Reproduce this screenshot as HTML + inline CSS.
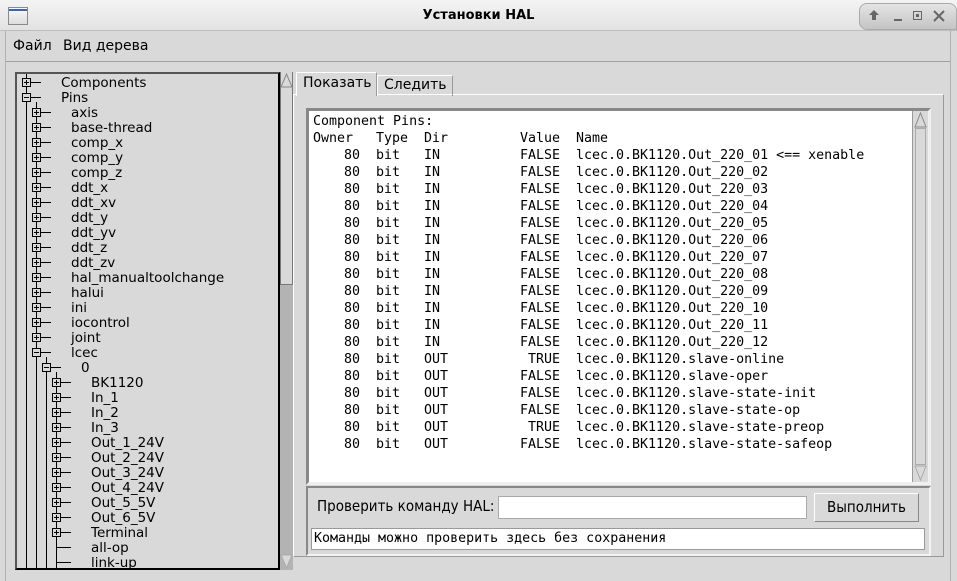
<!DOCTYPE html>
<html><head><meta charset="utf-8">
<style>
*{margin:0;padding:0;box-sizing:border-box}
body{width:957px;height:581px;background:#d9d9d9;position:relative;overflow:hidden;font-family:"DejaVu Sans","Liberation Sans",sans-serif;font-size:13.5px;color:#000}
.abs{position:absolute}
.title{left:0;top:0;width:957px;height:31px;background:linear-gradient(#f4f4f4,#e2e2e2);border-bottom:1px solid #bdbdbd}
.mono{font-family:"DejaVu Sans Mono","Liberation Mono",monospace;font-size:13.3px;white-space:pre}
.row{position:absolute;left:0;height:17px;line-height:17px}
.row span{position:absolute;top:0}
.cond{font-family:"DejaVu Sans Condensed","DejaVu Sans","Liberation Sans",sans-serif;font-stretch:condensed}
</style></head><body>
<div class="abs title">
  <div class="abs" style="left:8px;top:7px;width:20px;height:18px;border:1px solid #8a8a8a;background:linear-gradient(#fafafa,#ddd)"><div style="height:2px;background:#3c64b4;margin-top:1px"></div></div>
  <div class="abs" style="left:0;width:957px;top:8px;text-align:center;font-weight:bold;font-size:13px">Установки HAL</div>
  <div class="abs" style="left:859px;top:3px;width:98px;height:27px;border:1px solid #aaa;border-radius:8px 8px 0 8px;background:linear-gradient(#e4e4e4,#c4c4c4)"></div>
  <svg class="abs" style="left:868px;top:9px" width="12" height="12"><path d="M6 1L1 6H4V11H8V6H11Z" fill="#666"/></svg>
  <div class="abs" style="left:894px;top:19px;width:8px;height:2px;background:#666"></div>
  <div class="abs" style="left:913px;top:11px;width:9px;height:9px;border:1px solid #666"><div style="margin:2px;height:3px;background:#666"></div></div>
  <svg class="abs" style="left:933px;top:10px" width="12" height="12"><path d="M1 1L11 11M11 1L1 11" stroke="#666" stroke-width="2"/></svg>
</div>
<div class="abs" style="left:5px;top:31px;width:1px;height:550px;background:#b0b0b0"></div>
<div class="abs" style="left:950px;top:31px;width:1px;height:550px;background:#b0b0b0"></div>
<div class="abs" style="left:6px;top:31px;width:944px;height:31px;border-bottom:1px solid #a0a0a0"></div>
<div class="abs" style="left:13px;top:38px;font-size:14px">Файл</div>
<div class="abs" style="left:63px;top:38px;font-size:14px">Вид дерева</div>

<div class="abs" style="left:15px;top:72px;width:265px;height:498px;border:2px solid #000;border-color:#555 #000 #000 #555;background:#d9d9d9;overflow:hidden">
<svg width="263" height="496" style="position:absolute;left:-17px;top:-74px;overflow:visible" xmlns="http://www.w3.org/2000/svg">
<g stroke="#000" stroke-width="1" fill="none" shape-rendering="crispEdges">
<line x1="26.5" y1="74" x2="26.5" y2="570"/>
<line x1="36.5" y1="102" x2="36.5" y2="570"/>
<line x1="46.5" y1="357" x2="46.5" y2="570"/>
<line x1="56.5" y1="372" x2="56.5" y2="570"/>
</g>
<g font-family="DejaVu Sans, Liberation Sans, sans-serif" font-size="13.5" fill="#000">
<text x="61" y="87">Components</text><text x="61" y="102">Pins</text>
<text x="71" y="117">axis</text><text x="71" y="132">base-thread</text><text x="71" y="147">comp_x</text><text x="71" y="162">comp_y</text><text x="71" y="177">comp_z</text><text x="71" y="192">ddt_x</text><text x="71" y="207">ddt_xv</text><text x="71" y="222">ddt_y</text><text x="71" y="237">ddt_yv</text><text x="71" y="252">ddt_z</text><text x="71" y="267">ddt_zv</text><text x="71" y="282">hal_manualtoolchange</text><text x="71" y="297">halui</text><text x="71" y="312">ini</text><text x="71" y="327">iocontrol</text><text x="71" y="342">joint</text><text x="71" y="357">lcec</text>
<text x="81" y="372">0</text>
<text x="91" y="387">BK1120</text><text x="91" y="402">In_1</text><text x="91" y="417">In_2</text><text x="91" y="432">In_3</text><text x="91" y="447">Out_1_24V</text><text x="91" y="462">Out_2_24V</text><text x="91" y="477">Out_3_24V</text><text x="91" y="492">Out_4_24V</text><text x="91" y="507">Out_5_5V</text><text x="91" y="522">Out_6_5V</text><text x="91" y="537">Terminal</text><text x="91" y="552">all-op</text><text x="91" y="567">link-up</text>
</g>
<g stroke="#000" stroke-width="1" fill="#d9d9d9" shape-rendering="crispEdges">
<path d="M31 82.5H41M31 97.5H41"/><rect x="22.5" y="78.5" width="8" height="8"/><path d="M24 82.5h5M26.5 80v5"/>
<rect x="22.5" y="93.5" width="8" height="8"/><path d="M24 97.5h5"/>
</g>
<g stroke="#000" stroke-width="1" fill="#d9d9d9" shape-rendering="crispEdges">
<path d="M41 112.5h10M41 127.5h10M41 142.5h10M41 157.5h10M41 172.5h10M41 187.5h10M41 202.5h10M41 217.5h10M41 232.5h10M41 247.5h10M41 262.5h10M41 277.5h10M41 292.5h10M41 307.5h10M41 322.5h10M41 337.5h10M41 352.5h10"/>
<rect x="32.5" y="108.5" width="8" height="8"/><rect x="32.5" y="123.5" width="8" height="8"/><rect x="32.5" y="138.5" width="8" height="8"/><rect x="32.5" y="153.5" width="8" height="8"/><rect x="32.5" y="168.5" width="8" height="8"/><rect x="32.5" y="183.5" width="8" height="8"/><rect x="32.5" y="198.5" width="8" height="8"/><rect x="32.5" y="213.5" width="8" height="8"/><rect x="32.5" y="228.5" width="8" height="8"/><rect x="32.5" y="243.5" width="8" height="8"/><rect x="32.5" y="258.5" width="8" height="8"/><rect x="32.5" y="273.5" width="8" height="8"/><rect x="32.5" y="288.5" width="8" height="8"/><rect x="32.5" y="303.5" width="8" height="8"/><rect x="32.5" y="318.5" width="8" height="8"/><rect x="32.5" y="333.5" width="8" height="8"/><rect x="32.5" y="348.5" width="8" height="8"/>
<path d="M34 112.5h5M36.5 110v5M34 127.5h5M36.5 125v5M34 142.5h5M36.5 140v5M34 157.5h5M36.5 155v5M34 172.5h5M36.5 170v5M34 187.5h5M36.5 185v5M34 202.5h5M36.5 200v5M34 217.5h5M36.5 215v5M34 232.5h5M36.5 230v5M34 247.5h5M36.5 245v5M34 262.5h5M36.5 260v5M34 277.5h5M36.5 275v5M34 292.5h5M36.5 290v5M34 307.5h5M36.5 305v5M34 322.5h5M36.5 320v5M34 337.5h5M36.5 335v5M34 352.5h5"/>
<path d="M51 367.5h10"/><rect x="42.5" y="363.5" width="8" height="8"/><path d="M44 367.5h5"/>
<path d="M61 382.5h10M61 397.5h10M61 412.5h10M61 427.5h10M61 442.5h10M61 457.5h10M61 472.5h10M61 487.5h10M61 502.5h10M61 517.5h10M61 532.5h10M57 547.5h14M57 562.5h14"/>
<rect x="52.5" y="378.5" width="8" height="8"/><rect x="52.5" y="393.5" width="8" height="8"/><rect x="52.5" y="408.5" width="8" height="8"/><rect x="52.5" y="423.5" width="8" height="8"/><rect x="52.5" y="438.5" width="8" height="8"/><rect x="52.5" y="453.5" width="8" height="8"/><rect x="52.5" y="468.5" width="8" height="8"/><rect x="52.5" y="483.5" width="8" height="8"/><rect x="52.5" y="498.5" width="8" height="8"/><rect x="52.5" y="513.5" width="8" height="8"/><rect x="52.5" y="528.5" width="8" height="8"/>
<path d="M54 382.5h5M56.5 380v5M54 397.5h5M56.5 395v5M54 412.5h5M56.5 410v5M54 427.5h5M56.5 425v5M54 442.5h5M56.5 440v5M54 457.5h5M56.5 455v5M54 472.5h5M56.5 470v5M54 487.5h5M56.5 485v5M54 502.5h5M56.5 500v5M54 517.5h5M56.5 515v5M54 532.5h5M56.5 530v5"/>
</g>
</svg>
</div>
<div class="abs" style="left:280px;top:72px;width:13px;height:498px;background:#b3b3b3"></div>
<div class="abs" style="left:280px;top:72px;width:13px;height:213px;background:#d9d9d9;border:1px solid #777;border-top:none"></div>
<svg class="abs" style="left:280px;top:72px" width="13" height="16"><path d="M1 15L6.5 2L12 15Z" fill="#d9d9d9" stroke="#888"/></svg>
<svg class="abs" style="left:280px;top:554px" width="13" height="16"><path d="M1 1L6.5 14L12 1Z" fill="#d9d9d9" stroke="#aaa"/></svg>

<div class="abs" style="left:293px;top:94px;width:651px;height:463px;border:1px solid #aaa;border-color:#fff #999 #999 #fff;box-shadow:inset 0 0 0 1px #d9d9d9"></div>
<div class="abs" style="left:296px;top:72px;width:81px;height:24px;border:1px solid #aaa;border-bottom:none;border-color:#fff #999 #999 #fff;background:#d9d9d9;padding:2px 0 0 6px;font-size:14px">Показать</div>
<div class="abs" style="left:377px;top:75px;width:76px;height:21px;border:1px solid #aaa;border-color:#fff #999 #999 #fff;border-bottom:none;padding:1px 0 0 6px;font-size:14px">Следить</div>

<div class="abs" style="left:306px;top:108px;width:625px;height:377px;border:3px solid #888;border-color:#888 #f0f0f0 #f0f0f0 #888;background:#fff"></div>
<div class="abs" style="left:912px;top:111px;width:16px;height:371px;background:#d9d9d9;border-left:1px solid #999"></div>
<svg class="abs" style="left:913px;top:111px" width="15" height="371"><path d="M2 16L7.5 2L13 16Z" fill="#d9d9d9" stroke="#888"/><rect x="2.5" y="17.5" width="10" height="336" fill="none" stroke="#aaa"/><path d="M2 355L7.5 369L13 355Z" fill="#d9d9d9" stroke="#aaa"/></svg>

<div class="abs mono" style="left:313px;top:113px;width:595px;height:360px">
<div class="row" style="top:0"><span style="left:0">Component Pins:</span></div>
<div class="row" style="top:17px"><span style="left:0">Owner</span><span style="left:63px">Type</span><span style="left:111px">Dir</span><span style="left:207px">Value</span><span style="left:263px">Name</span></div>
<div class="row" style="top:34px"><span style="left:31px">80</span><span style="left:63px">bit</span><span style="left:111px">IN</span><span style="left:207px">FALSE</span><span style="left:263px">lcec.0.BK1120.Out_220_01 &lt;== xenable</span></div>
<div class="row" style="top:51px"><span style="left:31px">80</span><span style="left:63px">bit</span><span style="left:111px">IN</span><span style="left:207px">FALSE</span><span style="left:263px">lcec.0.BK1120.Out_220_02</span></div>
<div class="row" style="top:68px"><span style="left:31px">80</span><span style="left:63px">bit</span><span style="left:111px">IN</span><span style="left:207px">FALSE</span><span style="left:263px">lcec.0.BK1120.Out_220_03</span></div>
<div class="row" style="top:85px"><span style="left:31px">80</span><span style="left:63px">bit</span><span style="left:111px">IN</span><span style="left:207px">FALSE</span><span style="left:263px">lcec.0.BK1120.Out_220_04</span></div>
<div class="row" style="top:102px"><span style="left:31px">80</span><span style="left:63px">bit</span><span style="left:111px">IN</span><span style="left:207px">FALSE</span><span style="left:263px">lcec.0.BK1120.Out_220_05</span></div>
<div class="row" style="top:119px"><span style="left:31px">80</span><span style="left:63px">bit</span><span style="left:111px">IN</span><span style="left:207px">FALSE</span><span style="left:263px">lcec.0.BK1120.Out_220_06</span></div>
<div class="row" style="top:136px"><span style="left:31px">80</span><span style="left:63px">bit</span><span style="left:111px">IN</span><span style="left:207px">FALSE</span><span style="left:263px">lcec.0.BK1120.Out_220_07</span></div>
<div class="row" style="top:153px"><span style="left:31px">80</span><span style="left:63px">bit</span><span style="left:111px">IN</span><span style="left:207px">FALSE</span><span style="left:263px">lcec.0.BK1120.Out_220_08</span></div>
<div class="row" style="top:170px"><span style="left:31px">80</span><span style="left:63px">bit</span><span style="left:111px">IN</span><span style="left:207px">FALSE</span><span style="left:263px">lcec.0.BK1120.Out_220_09</span></div>
<div class="row" style="top:187px"><span style="left:31px">80</span><span style="left:63px">bit</span><span style="left:111px">IN</span><span style="left:207px">FALSE</span><span style="left:263px">lcec.0.BK1120.Out_220_10</span></div>
<div class="row" style="top:204px"><span style="left:31px">80</span><span style="left:63px">bit</span><span style="left:111px">IN</span><span style="left:207px">FALSE</span><span style="left:263px">lcec.0.BK1120.Out_220_11</span></div>
<div class="row" style="top:221px"><span style="left:31px">80</span><span style="left:63px">bit</span><span style="left:111px">IN</span><span style="left:207px">FALSE</span><span style="left:263px">lcec.0.BK1120.Out_220_12</span></div>
<div class="row" style="top:238px"><span style="left:31px">80</span><span style="left:63px">bit</span><span style="left:111px">OUT</span><span style="left:215px">TRUE</span><span style="left:263px">lcec.0.BK1120.slave-online</span></div>
<div class="row" style="top:255px"><span style="left:31px">80</span><span style="left:63px">bit</span><span style="left:111px">OUT</span><span style="left:207px">FALSE</span><span style="left:263px">lcec.0.BK1120.slave-oper</span></div>
<div class="row" style="top:272px"><span style="left:31px">80</span><span style="left:63px">bit</span><span style="left:111px">OUT</span><span style="left:207px">FALSE</span><span style="left:263px">lcec.0.BK1120.slave-state-init</span></div>
<div class="row" style="top:289px"><span style="left:31px">80</span><span style="left:63px">bit</span><span style="left:111px">OUT</span><span style="left:207px">FALSE</span><span style="left:263px">lcec.0.BK1120.slave-state-op</span></div>
<div class="row" style="top:306px"><span style="left:31px">80</span><span style="left:63px">bit</span><span style="left:111px">OUT</span><span style="left:215px">TRUE</span><span style="left:263px">lcec.0.BK1120.slave-state-preop</span></div>
<div class="row" style="top:323px"><span style="left:31px">80</span><span style="left:63px">bit</span><span style="left:111px">OUT</span><span style="left:207px">FALSE</span><span style="left:263px">lcec.0.BK1120.slave-state-safeop</span></div>
</div>

<div class="abs" style="left:306px;top:486px;width:625px;height:70px;border:2px solid #888;border-color:#888 #f4f4f4 #f4f4f4 #888"></div>
<div class="abs cond" style="left:317px;top:497px;font-size:15px">Проверить команду HAL:</div>
<div class="abs" style="left:498px;top:496px;width:309px;height:23px;background:#fff;border:1px solid #aaa"></div>
<div class="abs cond" style="left:814px;top:493px;width:105px;height:29px;border:1px solid #999;border-color:#fff #888 #888 #fff;text-align:center;line-height:27px;font-size:15px">Выполнить</div>
<div class="abs" style="left:311px;top:528px;width:614px;height:22px;background:#fff;border:1px solid #999;line-height:20px;padding-left:2px;font-family:'DejaVu Sans Mono',monospace;font-size:13.3px;white-space:pre">Команды можно проверить здесь без сохранения</div>
</body></html>
